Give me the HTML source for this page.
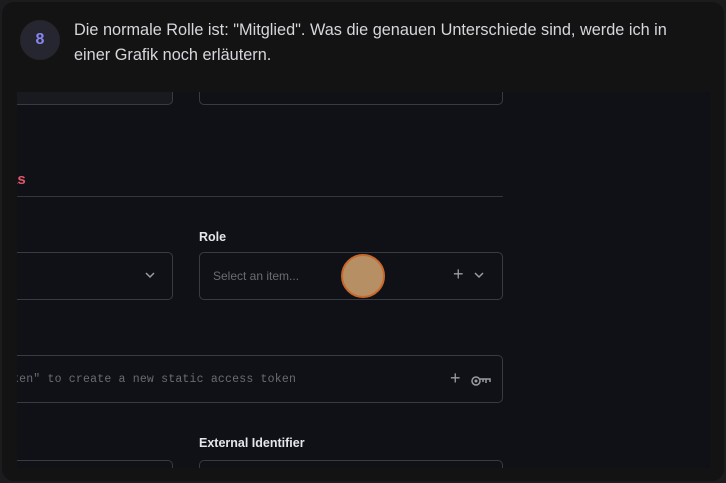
<!DOCTYPE html>
<html><head><style>
*{margin:0;padding:0;box-sizing:border-box}
body{width:726px;height:483px;background:#1c1c1e;overflow:hidden;font-family:"Liberation Sans",sans-serif;position:relative}
.card{position:absolute;left:2px;top:2px;width:722px;height:479px;background:#131313;border-radius:12px;overflow:hidden}
.badge{position:absolute;left:18px;top:18px;width:40px;height:40px;border-radius:50%;background:#25262f;color:#8a86f0;font-weight:bold;font-size:16px;text-align:center;line-height:40px}
.msg{position:absolute;left:72px;top:16px;width:640px;color:#d6d6dc;font-size:16.3px;line-height:25px;white-space:nowrap}
.shot{position:absolute;left:15px;top:90px;width:493px;height:376px;background:#101116;overflow:hidden}
.shot2{position:absolute;left:508px;top:90px;width:200px;height:376px;background:#101116}
.box{position:absolute;border:1.5px solid #393b42;border-radius:5px}
.lbl{position:absolute;color:#e6e6ea;font-weight:bold;font-size:12.5px}
.ph{position:absolute;color:#6a6c73;font-size:12px}
</style></head><body>
<div class="card">
<div class="badge">8</div>
<div class="msg">Die normale Rolle ist: "Mitglied". Was die genauen Unterschiede sind, werde ich in<br>einer Grafik noch erläutern.</div>
<div class="shot2"></div>
<div class="shot">
 <div class="box" style="left:-10px;top:-10px;width:166px;height:23px;background:#181a20"></div>
 <div class="box" style="left:182px;top:-10px;width:304px;height:23px"></div>
 <div style="position:absolute;left:-8px;top:79px;color:#e0566a;font-weight:bold;font-size:15px">as</div>
 <div style="position:absolute;left:0;top:104px;width:486px;height:1px;background:#34363c"></div>
 <div class="lbl" style="left:182px;top:138px">Role</div>
 <div class="box" style="left:-10px;top:160px;width:166px;height:48px"></div>
 <svg style="position:absolute;left:127px;top:178px" width="12" height="10"><path d="M2 3l4 4 4-4" stroke="#9a9ca3" stroke-width="1.5" fill="none"/></svg>
 <div class="box" style="left:182px;top:160px;width:304px;height:48px"></div>
 <div class="ph" style="left:196px;top:177px">Select an item...</div>
 <div style="position:absolute;left:436px;top:172px;color:#9a9ca3;font-size:18px">+</div>
 <svg style="position:absolute;left:456px;top:178px" width="12" height="10"><path d="M2 3l4 4 4-4" stroke="#9a9ca3" stroke-width="1.5" fill="none"/></svg>
 <div class="box" style="left:-10px;top:263px;width:496px;height:48px"></div>
 <div style="position:absolute;left:-5px;top:281px;color:#6a6c73;font-family:'Liberation Mono',monospace;font-size:11.5px;letter-spacing:0.2px;white-space:pre">ken" to create a new static access token</div>
 <div style="position:absolute;left:433px;top:276px;color:#9a9ca3;font-size:18px">+</div>
 <svg style="position:absolute;left:454px;top:283px" width="20" height="12"><circle cx="5" cy="6" r="4" stroke="#9a9ca3" stroke-width="1.5" fill="none"/><circle cx="5" cy="6" r="1.5" fill="#9a9ca3"/><path d="M9 4h10v3M15 4v4M12 4v3" stroke="#9a9ca3" stroke-width="1.5" fill="none"/></svg>
 <div class="lbl" style="left:182px;top:344px">External Identifier</div>
 <div class="box" style="left:-10px;top:368px;width:166px;height:40px"></div>
 <div class="box" style="left:182px;top:368px;width:304px;height:40px"></div>
 <div style="position:absolute;left:324px;top:162px;width:44px;height:44px;border-radius:50%;background:#b78f65;border:2px solid #c9682b"></div>
</div>
</div>
</body></html>
